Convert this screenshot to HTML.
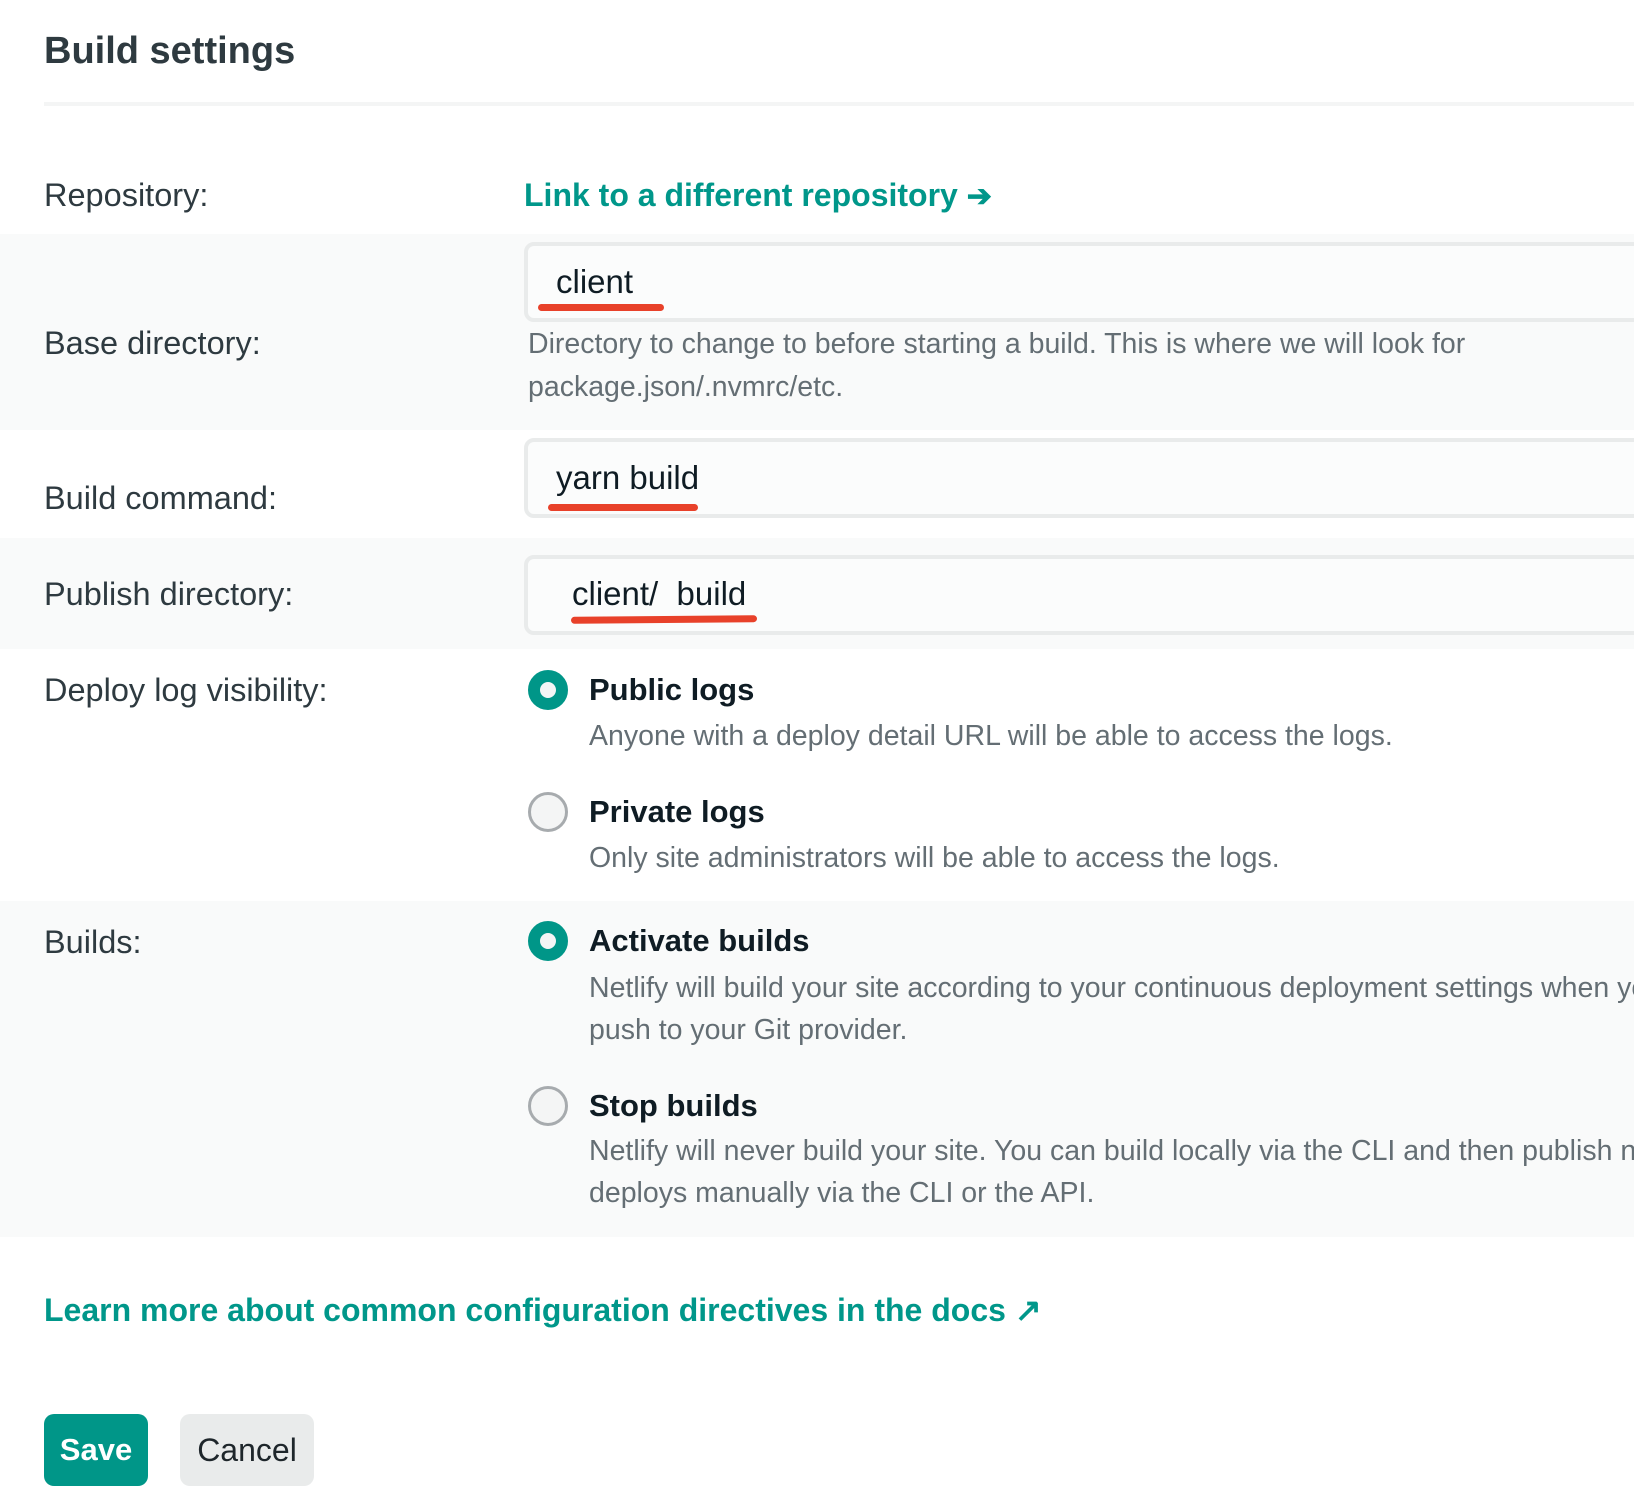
<!DOCTYPE html>
<html><head><meta charset="utf-8"><style>
*{margin:0;padding:0;box-sizing:border-box}
body{width:1634px;height:1504px;background:#fff;font-family:"Liberation Sans",sans-serif;position:relative;overflow:hidden;color:#2e3a40}
.a{position:absolute;white-space:nowrap}
.bg{position:absolute;left:0;width:1634px;background:#f9fafa}
.lbl{font-size:32.5px;line-height:36px;color:#2e3a40}
.inp{position:absolute;left:524px;width:1200px;height:80px;border:4px solid #e9ebeb;border-radius:10px;background:#fbfcfc}
.val{font-size:33px;line-height:38px;color:#0f1c24}
.red{position:absolute;height:7px;background:#e8412a;border-radius:4px}
.help{font-size:28.5px;line-height:32px;color:#646e74}
.opt{font-size:31px;line-height:36px;font-weight:bold;color:#0f1c24}
.r{position:absolute;width:40px;height:40px;border-radius:50%}
.on{border:12px solid #009688;background:#f4f5f5}
.off{border:3px solid #a7abae;background:#f4f5f5}
.link{color:#00978a;font-weight:bold;font-size:32px;line-height:36px}
</style></head><body>
<div class="a" style="left:44px;top:28px;font-size:38px;line-height:46px;font-weight:bold;color:#2e3a40">Build settings</div>
<div class="a" style="left:44px;top:102px;width:1590px;height:4px;background:#f4f5f5"></div>

<div class="a lbl" style="left:44px;top:177px">Repository:</div>
<div class="a link" style="left:524px;top:177px">Link to a different repository <b style="font-size:30px">➔</b></div>

<div class="bg" style="top:234px;height:196px"></div>
<div class="inp" style="top:242px"></div>
<div class="a val" style="left:556px;top:263px">client</div>
<div class="red" style="left:538px;top:304px;width:126px"></div>
<div class="a lbl" style="left:44px;top:325px">Base directory:</div>
<div class="a help" style="left:528px;top:328px">Directory to change to before starting a build. This is where we will look for</div>
<div class="a help" style="left:528px;top:371px">package.json/.nvmrc/etc.</div>

<div class="inp" style="top:438px"></div>
<div class="a val" style="left:556px;top:459px">yarn build</div>
<div class="red" style="left:548px;top:504px;width:150px"></div>
<div class="a lbl" style="left:44px;top:480px">Build command:</div>

<div class="bg" style="top:538px;height:111px"></div>
<div class="inp" style="top:555px"></div>
<div class="a val" style="left:572px;top:575px">client/&nbsp;&nbsp;build</div>
<div class="red" style="left:571px;top:616px;width:186px;transform:rotate(-0.5deg)"></div>
<div class="a lbl" style="left:44px;top:576px">Publish directory:</div>

<div class="a lbl" style="left:44px;top:672px">Deploy log visibility:</div>
<div class="r on" style="left:528px;top:670px"></div>
<div class="a opt" style="left:589px;top:672px">Public logs</div>
<div class="a help" style="left:589px;top:720px">Anyone with a deploy detail URL will be able to access the logs.</div>
<div class="r off" style="left:528px;top:792px"></div>
<div class="a opt" style="left:589px;top:794px">Private logs</div>
<div class="a help" style="left:589px;top:842px">Only site administrators will be able to access the logs.</div>

<div class="bg" style="top:901px;height:336px"></div>
<div class="a lbl" style="left:44px;top:924px">Builds:</div>
<div class="r on" style="left:528px;top:921px"></div>
<div class="a opt" style="left:589px;top:923px">Activate builds</div>
<div class="a help" style="left:589px;top:972px">Netlify will build your site according to your continuous deployment settings when you</div>
<div class="a help" style="left:589px;top:1014px">push to your Git provider.</div>
<div class="r off" style="left:528px;top:1086px"></div>
<div class="a opt" style="left:589px;top:1088px">Stop builds</div>
<div class="a help" style="left:589px;top:1135px">Netlify will never build your site. You can build locally via the CLI and then publish new</div>
<div class="a help" style="left:589px;top:1177px">deploys manually via the CLI or the API.</div>

<div class="a link" style="left:44px;top:1292px">Learn more about common configuration directives in the docs ↗</div>

<div class="a" style="left:44px;top:1414px;width:104px;height:72px;background:#009688;border-radius:10px;color:#fff;font-weight:bold;font-size:31px;line-height:72px;text-align:center">Save</div>
<div class="a" style="left:180px;top:1414px;width:134px;height:72px;background:#e9ebeb;border-radius:10px;color:#1e262b;font-size:32px;line-height:72px;text-align:center">Cancel</div>
</body></html>
